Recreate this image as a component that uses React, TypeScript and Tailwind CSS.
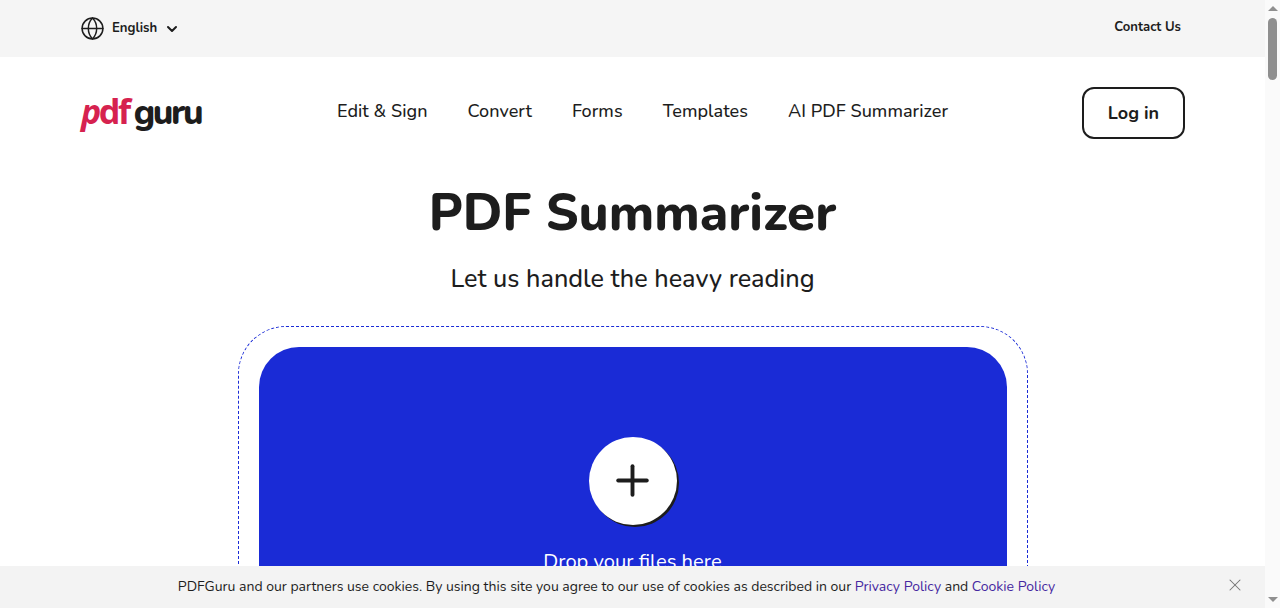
import { ChevronDown, Globe, Plus, X } from "lucide-react";

const navLinks = ["Edit & Sign", "Convert", "Forms", "Templates", "AI PDF Summarizer"];

function Scrollbar() {
  return (
    <div className="w-[15px] shrink-0 h-full bg-[#fafafa] flex flex-col items-center relative">
      <div className="mt-[6px] h-0 w-0 border-x-[5px] border-x-transparent border-b-[5px] border-b-[#8f8f8f]" />
      <div className="mt-[7px] h-[62px] w-[9px] rounded-full bg-[#8f8f8f]" />
      <div className="absolute bottom-[6px] h-0 w-0 border-x-[5px] border-x-transparent border-t-[5px] border-t-[#8f8f8f]" />
    </div>
  );
}

export default function App() {
  return (
    <div className="flex h-screen overflow-hidden bg-white text-[#1d1d1d] font-['Nunito','Noto_Sans',sans-serif]">
      <div className="flex-1 relative overflow-hidden">
        {/* Top bar */}
        <div className="bg-[#f5f5f5] h-[57px]">
          <div className="w-[1105px] mx-auto h-full flex items-center justify-between">
            <button className="flex items-center text-[13.2px] font-bold mt-[1px]">
              <Globe className="h-[25px] w-[25px] mr-[7px] -mt-[1px]" strokeWidth={1.4} />
              English
              <ChevronDown className="h-4 w-4 ml-[7px]" strokeWidth={3} />
            </button>
            <a className="text-[13.1px] font-bold pr-1 -mt-[2px]">Contact Us</a>
          </div>
        </div>

        {/* Main nav */}
        <div className="w-[1105px] mx-auto flex items-center justify-between pt-[30px]">
          <div className="flex items-baseline w-[125px] pl-[1px] text-[35px] leading-[52px] font-bold tracking-[-2.4px] -mt-[2px]">
            <span className="text-[#d6224f] font-['Noto_Sans',sans-serif] text-[34px]">
              <span className="italic">p</span>df
            </span>
            <span className="ml-[5px] font-['Nunito',sans-serif] font-extrabold">guru</span>
          </div>
          <nav className="flex gap-10 text-lg font-medium tracking-[0.05px] -mt-[5px] ml-[-2px]">
            {navLinks.map((link) => (
              <a key={link}>{link}</a>
            ))}
          </nav>
          <button className="w-[103px] h-[52px] rounded-xl border-2 border-[#1d1d1d] text-lg font-bold">
            Log in
          </button>
        </div>

        {/* Hero */}
        <h1 className="text-center text-[51.2px] leading-[64px] font-extrabold mt-[42px]">PDF Summarizer</h1>
        <p className="text-center text-[25.2px] leading-8 font-medium mt-[18px]">Let us handle the heavy reading</p>

        {/* Drop zone */}
        <div className="w-[790px] mx-auto mt-[31px] p-5 rounded-[48px] border border-dashed border-[#1a2bd6]">
          <div className="h-[420px] rounded-[40px] bg-[#1a2bd6] flex flex-col items-center pt-[90px]">
            <div className="h-[88px] w-[88px] rounded-full bg-white shadow-[2px_2px_0_#1d1d1d] flex items-center justify-center">
              <Plus className="h-[49px] w-[49px] -mt-[1px]" strokeWidth={1.9} />
            </div>
            <p className="mt-[23px] text-[20.2px] leading-7 text-white">Drop your files here</p>
          </div>
        </div>

        {/* Cookie notice */}
        <div className="absolute bottom-0 left-0 right-0 h-[42px] bg-[#f3f3f3] flex items-center justify-center text-sm pr-[32px]">
          <p>
            PDFGuru and our partners use cookies. By using this site you agree to our use of cookies as described in our{" "}
            <a className="text-[#4527a0]">Privacy Policy</a> and <a className="text-[#4527a0]">Cookie Policy</a>
          </p>
          <X className="absolute right-[20px] top-[9px] h-5 w-5 text-[#757575]" strokeWidth={1.25} />
        </div>
      </div>
      <Scrollbar />
    </div>
  );
}
